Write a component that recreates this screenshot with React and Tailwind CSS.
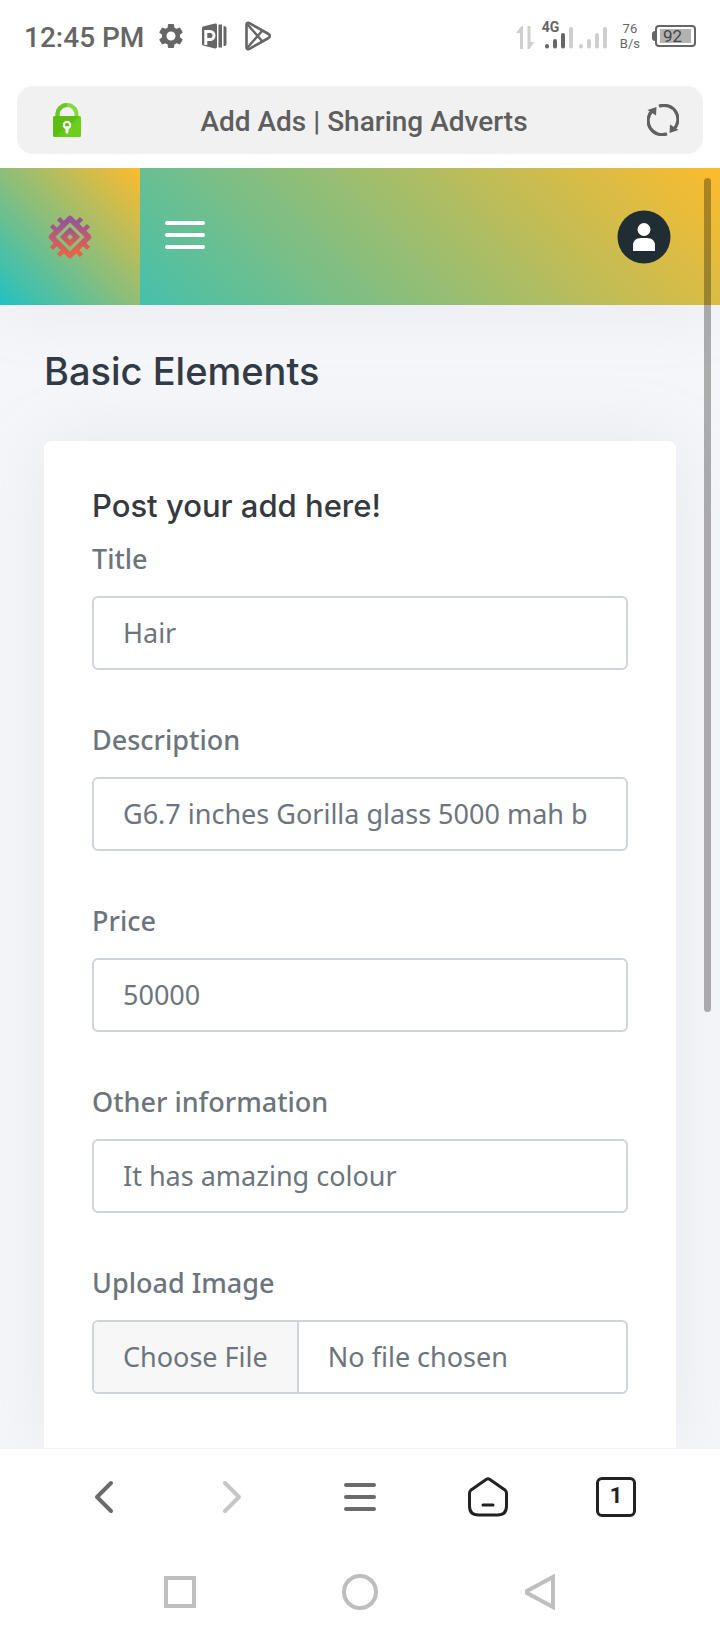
import React from 'react';
import { MdSettings } from 'react-icons/md';

const fields = [
    { id: 'title', label: 'Title', value: 'Hair' },
    { id: 'description', label: 'Description', value: 'G6.7 inches Gorilla glass 5000 mah b' },
    { id: 'price', label: 'Price', value: '50000' },
    { id: 'other', label: 'Other information', value: 'It has amazing colour' },
];

const PublisherIcon = () => (
    <svg viewBox="0 0 26 26" className="w-[26px] h-[26px]">
        <path d="M1 3.5 12 .8Q15 0 15 2v22q0 2-3 1.200L1 22.500Q0 22 0 21V5q0-1 1-1.500Z" fill="#666" />
        <path d="M3.800 22V8.500H8a4 4 0 0 1 0 8H4" fill="none" stroke="#fff" strokeWidth="3" />
        <path d="M16.500 1.500h3.500v23h-3.500ZM21.500 3q3 0 3 2v16q0 2-3 2Z" fill="#666" />
    </svg>
);

const PlayIcon = () => (
    <svg viewBox="0 0 28 30" className="w-[28px] h-[30px]" fill="none" stroke="#666" strokeLinejoin="round">
        <path d="M2.500 3.500v23c0 1.500 1.500 2 3 1.300L24.500 17c1.800-1 1.800-3 0-4L5.500 2.200c-1.500-.7-3-.2-3 1.300Z" strokeWidth="2.600" />
        <path d="M3.500 3.500 18.500 20.500M3.500 26.500 18.500 9.500" strokeWidth="2.400" />
    </svg>
);

const SignalIcons = () => (
    <svg viewBox="0 0 96 30" className="w-[96px] h-[30px]">
        <path d="M0 12 5.500 5H7v23H4V12ZM11.500 5h3v16h4L13.500 28h-2Z" fill="#cfcfcf" />
        <g strokeWidth="4" strokeLinecap="round" stroke="#666">
            <path d="M31 25v.5M39 20v5.500M47 14v11.500" />
            <path stroke="#cfcfcf" d="M55 8v17.500M65 25v.5M73 20v5.500M81 14v11.500M89 8v17.500" />
        </g>
    </svg>
);

const BatteryIcon = () => (
    <div className="flex items-center" role="img" aria-label="Battery">
        <div className="h-[10px] w-[3px] rounded-l bg-[#666]" />
        <div className="flex h-[22px] w-[41px] items-center rounded border-2 border-[#666] px-[3px] py-[2px]">
            <div className="flex w-full justify-center bg-[#b2b2b2] pr-[6px] font-['Roboto',sans-serif] text-[17px] leading-[14px] text-[#444]">
                92
            </div>
        </div>
    </div>
);

const LockIcon = () => (
    <svg viewBox="0 0 28 34" className="w-[28px] h-[34px]">
        <path d="M4.500 14v-2.500a9.500 9.500 0 0 1 19 0V14" fill="none" stroke="#7fdc3c" strokeWidth="4" />
        <path d="M4.500 14v-2.500A9.500 9.500 0 0 1 14 2" fill="none" stroke="#68c926" strokeWidth="4" />
        <rect y="13" width="28" height="21" rx="2" fill="#66c81a" />
        <path d="M0 25V15q0-2 2-2h24L2 34Q0 34 0 32Z" fill="#5dbd12" />
        <path d="M28 13v21H8Z" fill="#6fd31d" opacity=".6" />
        <circle cx="14" cy="22" r="3.200" fill="none" stroke="#fff" strokeWidth="2.200" />
        <path d="M14 24.500V29" stroke="#fff" strokeWidth="3" strokeLinecap="round" />
    </svg>
);

const ReloadIcon = () => (
    <svg viewBox="0 0 32 32" className="w-[32px] h-[32px]" fill="none" stroke="#606060" strokeWidth="3.200">
        <path d="M20 29.800A14 14 0 0 1 5.500 6.500M12 2.200A14 14 0 0 1 26.500 25.500" />
        <path d="M.5 6 9.500 3 9 11.500ZM31.500 26 22.500 29 23 20.500Z" fill="#606060" stroke="none" />
    </svg>
);

const LogoIcon = () => (
    <svg viewBox="0 0 44 44" className="w-[44px] h-[44px]" fill="none">
        <defs>
            <linearGradient id="logo-outer" x1="0" y1="0" x2="0" y2="44" gradientUnits="userSpaceOnUse">
                <stop offset="0.150" stopColor="#975596" />
                <stop offset="0.500" stopColor="#c25a71" />
                <stop offset="0.850" stopColor="#e2644b" />
            </linearGradient>
            <linearGradient id="logo-inner" x1="0" y1="12" x2="0" y2="32" gradientUnits="userSpaceOnUse">
                <stop stopColor="#93549a" />
                <stop offset="1" stopColor="#ed5f41" />
            </linearGradient>
        </defs>
        <g stroke="url(#logo-outer)">
            <path d="m22 3.500 18.500 18.500L22 40.500 3.500 22Z" strokeWidth="5.500" strokeLinejoin="round" />
            <path
                d="m10.500 3.500 6 6M3.500 10.500l6 6M33.500 3.500l-6 6M40.500 10.500l-6 6M10.500 40.500l6-6M3.500 33.500l6-6M33.500 40.500l-6-6M40.500 33.500l-6-6"
                strokeWidth="4.500"
            />
        </g>
        <path d="m22 15.500 6.500 6.500-6.500 6.500-6.500-6.500Z" stroke="url(#logo-inner)" strokeWidth="5" />
    </svg>
);

const UserIcon = () => (
    <svg viewBox="0 0 54 54" className="w-[54px] h-[54px]">
        <circle cx="27" cy="27" r="26.500" fill="#202d33" />
        <circle cx="27" cy="19.500" r="6.500" fill="#fff" />
        <path d="M16 41v-5q0-8 8-8h6q8 0 8 8v5Z" fill="#fff" />
    </svg>
);

const StatusBar = () => (
    <div className="flex h-[72px] items-center justify-between px-6 font-['Roboto',sans-serif] text-[#666]">
        <div className="flex items-center">
            <span className="pt-[3px] text-[28px] font-medium leading-8">12:45 PM</span>
            <MdSettings className="ml-3 text-[30px]" />
            <span className="ml-4"><PublisherIcon /></span>
            <span className="ml-4"><PlayIcon /></span>
        </div>
        <div className="flex items-center">
            <div className="relative">
                <SignalIcons />
                <span className="absolute -top-[2px] left-[26px] text-[14px] font-bold leading-4">4G</span>
            </div>
            <div className="ml-2 mr-3 text-center text-[13px] leading-[15px]">
                <div>76</div>
                <div>B/s</div>
            </div>
            <BatteryIcon />
        </div>
    </div>
);

const AddressBar = () => (
    <div className="px-[17px] pb-[14px] pt-[14px]">
        <div className="flex h-[68px] items-center justify-between rounded-2xl bg-[#f1f1f1] pl-9 pr-6">
            <LockIcon />
            <span className="pt-1 font-['Roboto',sans-serif] text-[28px] font-medium leading-8 text-[#5e5e5e]">
                Add Ads | Sharing Adverts
            </span>
            <button type="button" aria-label="Reload"><ReloadIcon /></button>
        </div>
    </div>
);

const SiteHeader = () => (
    <header className="flex h-[137px] bg-linear-[45deg,#22c1c3,#fdbb2d] shadow-[0_0_70px_0_rgba(154,161,171,0.15)]">
        <a
            href="#home"
            aria-label="Home"
            className="flex w-[140px] items-center justify-center bg-linear-[45deg,#22c1c3,#fdbb2d]"
        >
            <LogoIcon />
        </a>
        <div className="flex flex-1 items-center justify-between pl-[25px] pr-[49px]">
            <button type="button" aria-label="Menu" className="flex w-10 flex-col gap-2 pb-[3px]">
                <span className="h-1 rounded-full bg-white" />
                <span className="h-1 rounded-full bg-white" />
                <span className="h-1 rounded-full bg-white" />
            </button>
            <button type="button" aria-label="Account"><UserIcon /></button>
        </div>
    </header>
);

const labelClass = "block text-[27px] font-medium leading-10 text-[#6c757d]";

const AdForm = () => (
    <form className="flex flex-1 flex-col rounded-t-lg bg-white px-12 pt-[45px] shadow-[0_0_70px_0_rgba(154,161,171,0.15)]">
        <h2 className="font-['Inter',sans-serif] text-[31px] font-medium leading-10 text-[#343a40]">
            Post your add here!
        </h2>
        <div className="flex flex-col gap-[50px] pt-[13px] font-['Noto_Sans',sans-serif]">
            {fields.map((field) => (
                <div key={field.id}>
                    <label htmlFor={field.id} className={labelClass}>{field.label}</label>
                    <input
                        id={field.id}
                        type="text"
                        defaultValue={field.value}
                        className="mt-[17px] block h-[74px] w-full rounded-md border-2 border-[#ced4da] bg-white px-[29px] pb-[2px] text-[27px] text-[#6c757d]"
                    />
                </div>
            ))}
            <div>
                <label htmlFor="image" className={labelClass}>Upload Image</label>
                <input
                    id="image"
                    type="file"
                    className="mt-[17px] block h-[74px] w-full rounded-md border-2 border-[#ced4da] bg-white text-[27px] leading-[70px] text-[#6c757d] file:mr-[29px] file:h-[70px] file:border-r-2 file:border-[#ced4da] file:bg-[#f7f7f7] file:px-[29px]"
                />
            </div>
        </div>
    </form>
);

const BrowserBar = () => (
    <nav className="grid h-24 grid-cols-5 place-items-center border-t border-[#f2f2f2] px-10">
        <button type="button" aria-label="Back">
            <svg viewBox="0 0 20 34" className="w-5 h-[34px]" fill="none" stroke="#6b6b6b" strokeWidth="4" strokeLinecap="round" strokeLinejoin="round">
                <path d="M17 3 3 17l14 14" />
            </svg>
        </button>
        <button type="button" aria-label="Forward">
            <svg viewBox="0 0 20 34" className="w-5 h-[34px]" fill="none" stroke="#c6c6c6" strokeWidth="4" strokeLinecap="round" strokeLinejoin="round">
                <path d="m3 3 14 14L3 31" />
            </svg>
        </button>
        <button type="button" aria-label="Browser menu" className="flex w-8 flex-col gap-2">
            <span className="h-1 rounded-full bg-[#6b6b6b]" />
            <span className="h-1 rounded-full bg-[#6b6b6b]" />
            <span className="h-1 rounded-full bg-[#6b6b6b]" />
        </button>
        <button type="button" aria-label="Start page">
            <svg viewBox="0 0 40 40" className="w-10 h-10" fill="none" stroke="#222" strokeWidth="3" strokeLinecap="round" strokeLinejoin="round">
                <path d="M18.500 2.200q1.500-1 3 0L37 13q1.500 1.500 1.500 3v13q0 9-9 9h-19q-9 0-9-9V16q0-1.500 1.500-3Z" />
                <path d="M15 28h10" />
            </svg>
        </button>
        <button
            type="button"
            aria-label="Tabs"
            className="flex h-10 w-10 items-center justify-center rounded-md border-3 border-[#222] pb-[2px] font-['Roboto',sans-serif] text-[22px] font-bold leading-6 text-[#222]"
        >
            1
        </button>
    </nav>
);

const SystemBar = () => (
    <nav className="grid h-24 grid-cols-3 place-items-center px-[90px]">
        <button type="button" aria-label="Recent apps" className="h-8 w-8 border-4 border-[#bebebe]" />
        <button type="button" aria-label="Home screen" className="h-9 w-9 rounded-full border-4 border-[#bebebe]" />
        <button type="button" aria-label="System back">
            <svg viewBox="0 0 30 36" className="w-[30px] h-9" fill="none" stroke="#bebebe" strokeWidth="4">
                <path d="M28 3v30L2 19v-2Z" />
            </svg>
        </button>
    </nav>
);

export default function App() {
    return (
        <div className="flex min-h-screen flex-col bg-white">
            <StatusBar />
            <AddressBar />
            <div className="relative flex flex-1 flex-col overflow-hidden bg-[#f5f6fa]">
                <SiteHeader />
                <main className="flex flex-1 flex-col px-11">
                    <h1 className="pb-11 pt-10 font-['Inter',sans-serif] text-[38px] font-medium leading-[52px] text-[#323a46]">
                        Basic Elements
                    </h1>
                    <AdForm />
                </main>
                <div className="absolute right-[9px] top-[10px] h-[834px] w-[7px] rounded-full bg-black/30" />
            </div>
            <BrowserBar />
            <SystemBar />
        </div>
    );
}
